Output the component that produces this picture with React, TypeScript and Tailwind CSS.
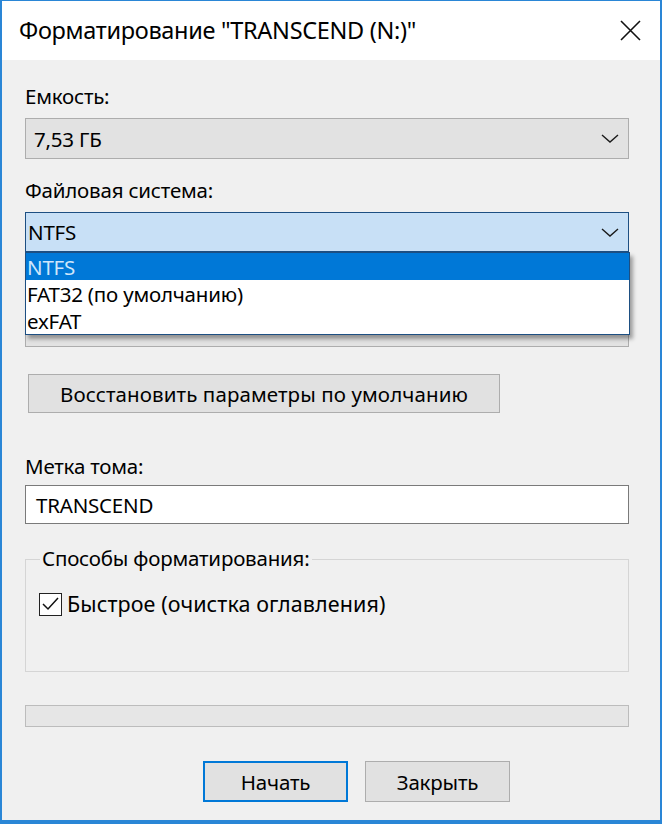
import React from 'react';

const Chevron = () => (
  <svg width="18" height="9" viewBox="0 0 18 9" fill="none" stroke="#1a1a1a" strokeWidth="1.4">
    <path d="M1 1 L9 8 L17 1" />
  </svg>
);

export default function App() {
  return (
    <div className="w-[662px] h-[824px] flex flex-col border-x-2 border-t border-b-4 border-[#2a86d6] bg-[#f0f0f0] font-['Noto_Sans',sans-serif] text-black">
      {/* title bar */}
      <div className="h-[59px] shrink-0 bg-white flex items-center justify-between pl-[17px] pr-[19px]">
        <span className="text-[23.5px] leading-none tracking-[-0.3px]">Форматирование "TRANSCEND (N:)"</span>
        <svg width="21" height="21" viewBox="0 0 21 21" stroke="#111" strokeWidth="1.6">
          <path d="M1 1 L20 20 M20 1 L1 20" />
        </svg>
      </div>

      <div className="flex flex-col pl-[23px] pr-[31px] pt-[23px] text-[20.5px] leading-[26px] tracking-[-0.2px]">
        <div>Емкость:</div>
        <div className="mt-[9px] h-[41px] border border-[#adadad] bg-[#e2e2e2] flex items-center justify-between pl-[8px] pr-[9px]">
          <span>7,53 ГБ</span>
          <Chevron />
        </div>

        <div className="mt-[18px]">Файловая система:</div>
        <div className="relative mt-[9px]">
          <div className="h-[40px] border border-[#1d4f82] bg-[#c8e0f6] flex items-center justify-between pl-[2px] pr-[9px]">
            <span>NTFS</span>
            <Chevron />
          </div>
          <div className="absolute left-0 top-[40px] w-[605px] h-[83px] border border-[#1d4f82] bg-white shadow-[3px_4px_4px_rgba(0,0,0,0.35)] z-10 flex flex-col">
            <div className="h-[27px] bg-[#0078d7] text-[#cfe6fb] flex items-center pl-[1px]">NTFS</div>
            <div className="h-[27px] flex items-center pl-[1px]">FAT32 (по умолчанию)</div>
            <div className="h-[27px] flex items-center pl-[1px]">exFAT</div>
          </div>
        </div>

        {/* allocation unit row, hidden under the open list */}
        <div className="mt-[20px] h-[26px]" />
        <div className="mt-[9px] h-[40px] border border-[#adadad] bg-[#e2e2e2]" />

        <div className="mt-[27px] ml-[3px] w-[472px] h-[39px] border border-[#adadad] bg-[#e1e1e1] flex items-center justify-center tracking-[0.1px]">
          Восстановить параметры по умолчанию
        </div>

        <div className="mt-[40px]">Метка тома:</div>
        <div className="mt-[6px] h-[39px] border border-[#7a7a7a] bg-white flex items-center pl-[10px]">
          TRANSCEND
        </div>

        <div className="relative mt-[35px] h-[113px] border border-[#d5d5d5]">
          <span className="absolute left-[14px] top-[-15px] bg-[#f0f0f0] px-[2px]">Способы форматирования:</span>
          <div className="flex items-center gap-[5px] mt-[31px] ml-[13px]">
            <div className="w-[23px] h-[23px] border-[1.5px] border-[#222] bg-white flex items-center justify-center">
              <svg width="17" height="14" viewBox="0 0 17 14" fill="none" stroke="#111" strokeWidth="1.5">
                <path d="M1 7 L6 12 L16 1" />
              </svg>
            </div>
            <span className="text-[21.5px] tracking-[0.1px]">Быстрое (очистка оглавления)</span>
          </div>
        </div>

        <div className="mt-[33px] h-[22px] border border-[#bcbcbc] bg-[#e6e6e6]" />

        <div className="mt-[34px] flex gap-[17px] ml-[178px]">
          <div className="w-[145px] h-[41px] border-2 border-[#0078d7] bg-[#e1e1e1] flex items-center justify-center">Начать</div>
          <div className="w-[145px] h-[41px] border border-[#adadad] bg-[#e1e1e1] flex items-center justify-center">Закрыть</div>
        </div>
      </div>
    </div>
  );
}
